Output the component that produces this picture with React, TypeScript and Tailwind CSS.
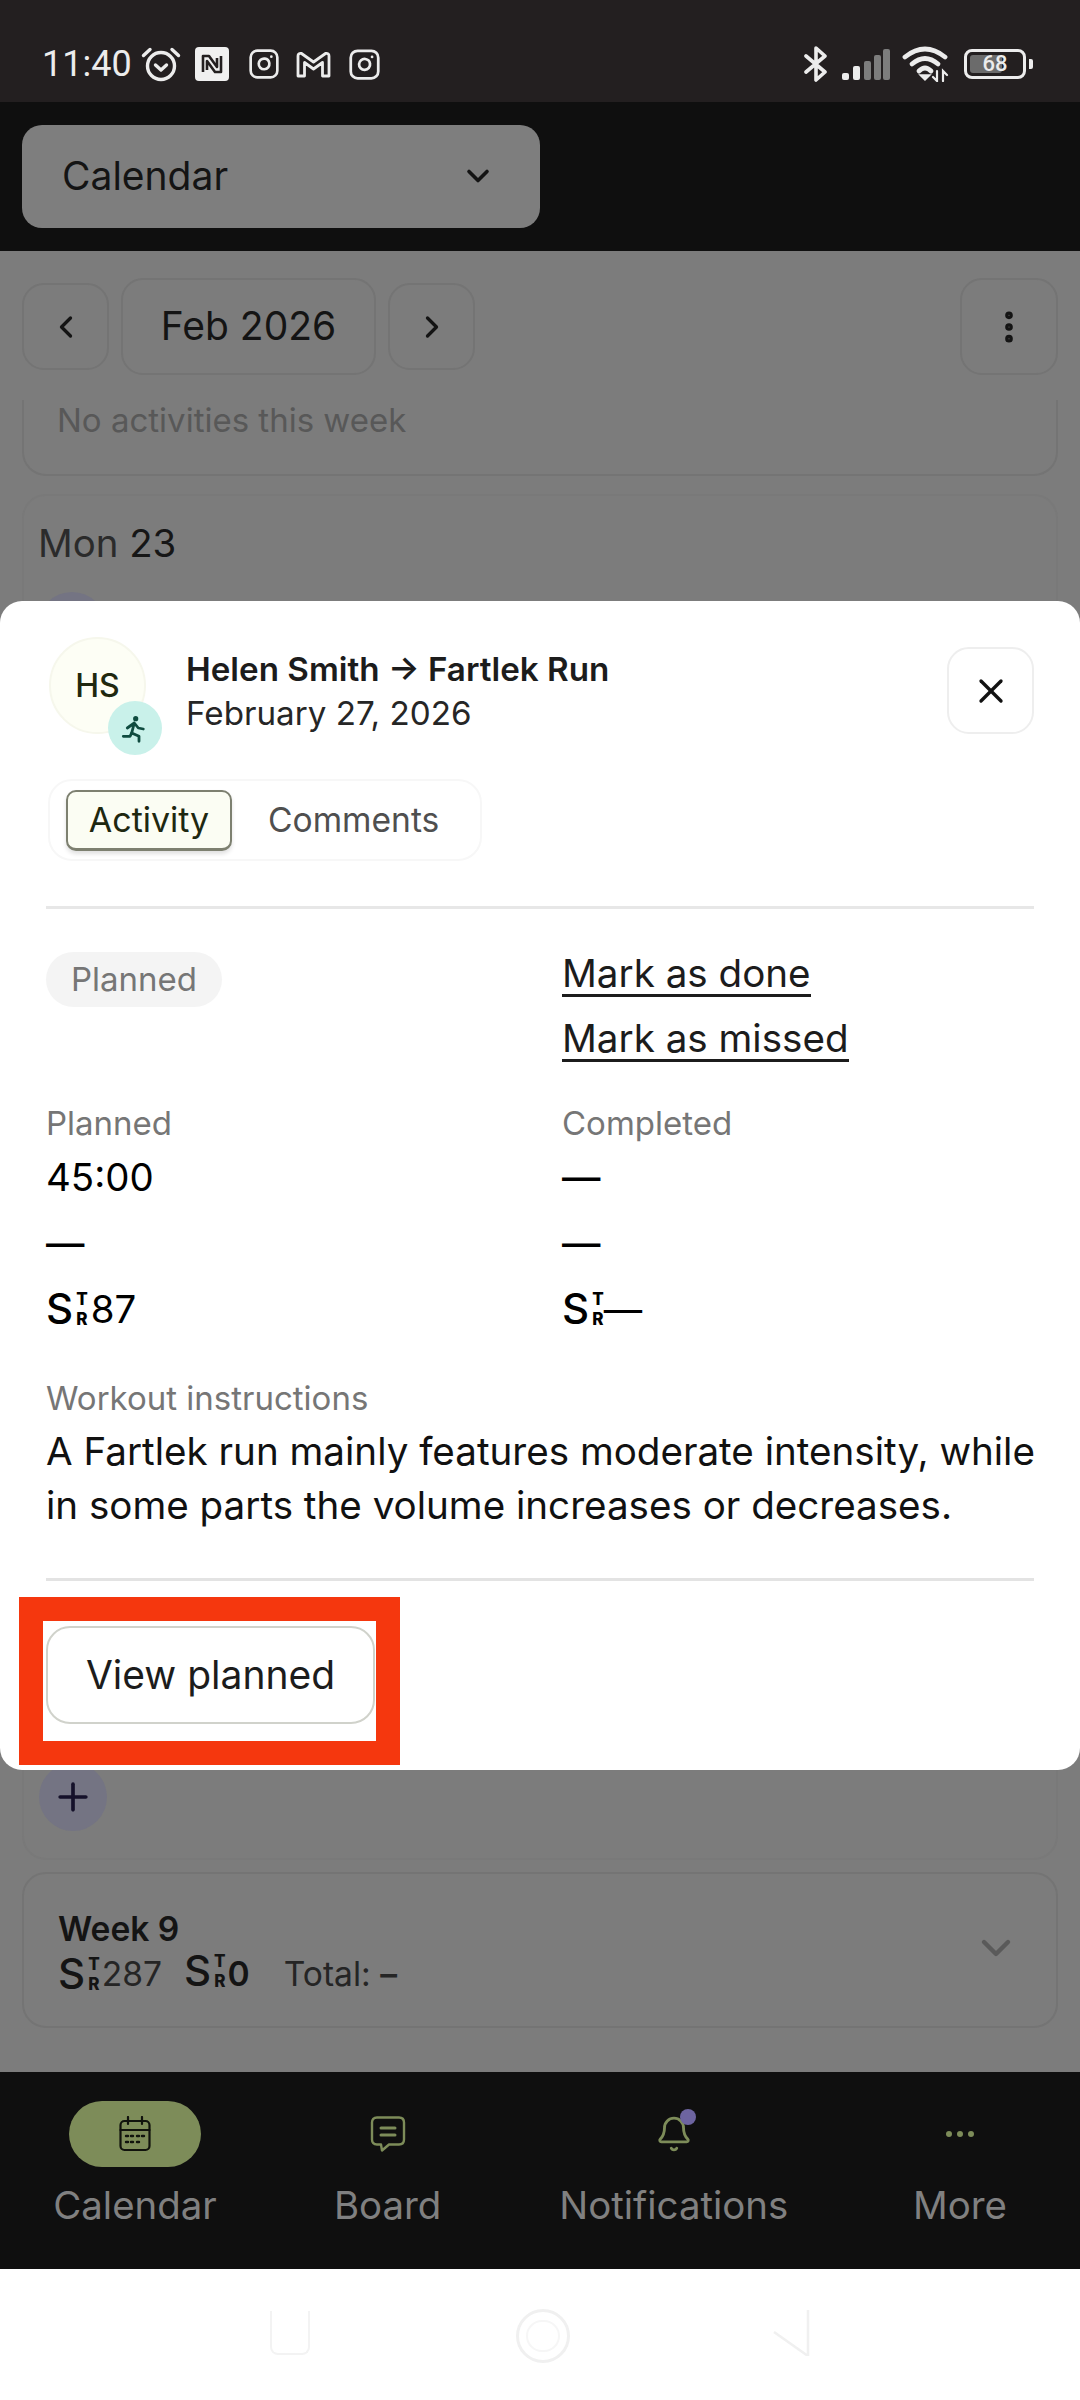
import { Bell, ChevronDown, ChevronLeft, ChevronRight, EllipsisVertical, Instagram, Plus, X } from "lucide-react";

function AlarmIcon() {
  return (
    <svg width="40" height="38" viewBox="0 0 40 38" fill="none" stroke="#ececec" strokeWidth="3.4" strokeLinecap="round" strokeLinejoin="round">
      <circle cx="20" cy="21" r="13.5" />
      <path d="M14.500 20l5.500 5 5.500-5" />
      <path d="M2.500 10.500L9 4.500M37.500 10.500L31 4.500" />
    </svg>
  );
}

function NfcIcon() {
  return (
    <svg width="34" height="34" viewBox="0 0 34 34" fill="none">
      <rect x="0" y="0" width="34" height="34" rx="4" fill="#f0f0f0" />
      <path d="M8 25V9l6 0 8 11V11M26 9v16h-6l-8-11v9" stroke="#231f20" strokeWidth="2.600" strokeLinejoin="round" />
    </svg>
  );
}

function MailIcon() {
  return (
    <svg width="35" height="27" viewBox="0 0 35 27" fill="none" stroke="#ececec" strokeWidth="2.800" strokeLinejoin="round">
      <path d="M2 25V5q0-3 3.500-2.500L17.500 11 29.500 2.500Q33 2 33 5v20h-6.500V11.500l-9 6.500-9-6.500V25z" />
    </svg>
  );
}

function BluetoothIcon() {
  return (
    <svg width="26" height="36" viewBox="0 0 26 36" fill="none" stroke="#ececec" strokeWidth="3.600" strokeLinecap="round" strokeLinejoin="round">
      <path d="M3 10l19 16-9 8V2l9 8L3 26" />
    </svg>
  );
}

function SignalIcon() {
  return (
    <svg width="48" height="31" viewBox="0 0 48 31">
      <rect x="0" y="24" width="7" height="7" rx="2" fill="#ececec" />
      <rect x="11" y="17" width="7" height="14" rx="2" fill="#ececec" />
      <rect x="22" y="12" width="7" height="19" rx="2" fill="#7d7d7d" />
      <rect x="32" y="6" width="7" height="25" rx="2" fill="#7d7d7d" />
      <rect x="41" y="0" width="7" height="31" rx="2" fill="#7d7d7d" />
    </svg>
  );
}

function WifiIcon() {
  return (
    <svg width="48" height="36" viewBox="0 0 48 36" fill="none" stroke="#ececec" strokeWidth="4.800" strokeLinecap="round">
      <path d="M3 11Q23-5 43 11" />
      <path d="M10 18Q23 7 36 18" />
      <path d="M17 25Q23 19 29 25" />
      <path d="M23 34l-5-5h10z" fill="#ececec" strokeWidth="1.500" />
      <path d="M35 25v10l-4-4M41 35V25l4 4" strokeWidth="2.200" />
    </svg>
  );
}

function BatteryIcon() {
  return (
    <div className="flex items-center gap-[3px]">
      <div className="relative flex h-[30px] w-[62px] items-center justify-center overflow-hidden rounded-[8px] border-[3px] border-[#ececec]">
        <div className="absolute top-[3px] bottom-[3px] left-[3px] w-[32px] rounded-[3px] bg-[#6b6b6b]" />
        <span className="relative font-['Roboto',sans-serif] text-[22px] leading-none font-medium text-[#ececec]">68</span>
      </div>
      <div className="h-[10px] w-[4px] rounded-r-[2px] bg-[#ececec]" />
    </div>
  );
}

function RunnerIcon() {
  return (
    <svg width="54" height="54" viewBox="0 0 54 54" fill="none" stroke="#0f4c40" strokeWidth="2.800" strokeLinecap="round" strokeLinejoin="round">
      <circle cx="27.700" cy="17.700" r="2.600" fill="#0f4c40" stroke="none" />
      <path d="M26.300 22L23.700 32M19.300 27l7-5 4 5 5 1" />
      <path d="M23.700 32L22 35.300h-6.700M23.700 32L31 35.300v5" />
    </svg>
  );
}

function StressScore({ color = "text-black" }: { color?: string }) {
  return (
    <span className={`inline-flex h-[32px] items-center ${color}`}>
      <span className="text-[42px] leading-none font-medium">S</span>
      <span className="ml-[3px] flex h-[34px] flex-col items-center justify-between text-[17px] leading-[14px] font-extrabold">
        <span>T</span>
        <span>R</span>
      </span>
    </span>
  );
}

function CalendarNavIcon() {
  return (
    <svg width="32" height="36" viewBox="0 0 32 36" fill="none" stroke="#11130d" strokeWidth="2.200" strokeLinecap="round">
      <rect x="1.500" y="5" width="29" height="29" rx="4" />
      <path d="M1.500 14h29M9 1v7M23 1v7" />
      <path d="M7 20h2M12 20h2M18 20h2M23 20h2M7 26h2M12 26h2M18 26h2" strokeWidth="2.400" />
    </svg>
  );
}

function BoardNavIcon() {
  return (
    <svg width="36" height="36" viewBox="0 0 36 36" fill="none" stroke="#7d8c59" strokeWidth="2.400" strokeLinejoin="round" strokeLinecap="round">
      <path d="M7 1.500h22q5 0 5 5v17q0 5-5 5H19l-7 6-1-6H7q-5 0-5-5v-17q0-5 5-5z" />
      <path d="M11 12h14M11 19h14" strokeWidth="3" />
    </svg>
  );
}

function NavItem({ label, active, children }: { label: string; active?: boolean; children: React.ReactNode }) {
  return (
    <div className="flex flex-col items-center">
      <div className={`flex h-[66px] w-[132px] items-center justify-center rounded-full ${active ? "bg-[#7d8c59]" : ""}`}>
        {children}
      </div>
      <span className="mt-[15px] text-[38.4px] leading-[46px] text-[#808080]">{label}</span>
    </div>
  );
}

function MetricRow({ children }: { children: React.ReactNode }) {
  return <div className="flex h-[66px] items-center text-[38.4px] leading-none font-medium text-black">{children}</div>;
}

export default function App() {
  return (
    <div className="relative flex h-[2400px] w-[1080px] flex-col overflow-hidden bg-white font-['Inter',sans-serif]">
      {/* status bar */}
      <div className="flex h-[102px] shrink-0 items-center justify-between bg-[#231f20] pt-[26px] pr-[47px] pl-[42px]">
        <div className="flex items-center">
          <span className="w-[91px] font-['Roboto',sans-serif] text-[36px] leading-none font-normal text-[#ececec]">11:40</span>
          <div className="ml-[8px] flex items-center">
            <AlarmIcon />
            <div className="ml-[14px]"><NfcIcon /></div>
            <Instagram className="ml-[19px]" size={32} color="#ececec" strokeWidth={2} />
            <div className="ml-[16px]"><MailIcon /></div>
            <Instagram className="ml-[17px]" size={33} color="#ececec" strokeWidth={2} />
          </div>
        </div>
        <div className="flex items-center">
          <BluetoothIcon />
          <div className="ml-[13px]"><SignalIcon /></div>
          <div className="ml-[12px]"><WifiIcon /></div>
          <div className="ml-[14px]"><BatteryIcon /></div>
        </div>
      </div>

      {/* app header */}
      <div className="flex h-[149px] shrink-0 items-center bg-[#0f0f0f] px-[22px]">
        <div className="flex h-[103px] w-[518px] items-center justify-between rounded-[20px] bg-[#7e7e7e] pr-[44px] pb-[2px] pl-[40px]">
          <span className="text-[39px] leading-none font-normal text-[#141414]">Calendar</span>
          <ChevronDown size={36} color="#141414" strokeWidth={2.4} />
        </div>
      </div>

      {/* dimmed page */}
      <div className="flex h-[1821px] shrink-0 flex-col bg-[#7c7c7c] px-[22px]">
        <div className="flex h-[149px] shrink-0 items-center justify-between pt-[2px]">
          <div className="flex items-center gap-[12px]">
            <div className="flex h-[87px] w-[87px] items-center justify-center rounded-[22px] border-2 border-[#747474]">
              <ChevronLeft size={36} color="#141414" strokeWidth={2.2} />
            </div>
            <div className="flex h-[97px] w-[255px] items-center justify-center rounded-[22px] border-2 border-[#747474] text-[39px] text-[#141414]">
              Feb 2026
            </div>
            <div className="flex h-[87px] w-[87px] items-center justify-center rounded-[22px] border-2 border-[#747474]">
              <ChevronRight size={36} color="#141414" strokeWidth={2.2} />
            </div>
          </div>
          <div className="flex h-[97px] w-[98px] items-center justify-center rounded-[22px] border-2 border-[#747474]">
            <EllipsisVertical size={40} color="#141414" strokeWidth={2.6} />
          </div>
        </div>

        <div className="h-[76px] shrink-0 rounded-b-[24px] border-x-2 border-b-2 border-[#747474] pl-[33px]">
          <span className="block text-[33px] leading-[41px] text-[#585858]">No activities this week</span>
        </div>

        <div className="relative mt-[18px] h-[1366px] shrink-0 rounded-[24px] border-2 border-[#797979] pt-[25px] pl-[14px]">
          <div className="text-[38.4px] leading-[44px] text-[#2b2b2b]">
            Mon <span className="font-normal text-[#161616]">23</span>
          </div>
          <div className="mt-[27px] flex h-[68px] w-[68px] items-center justify-center rounded-full bg-[#747483]" />
          <div className="absolute bottom-[27px] left-[15px] flex h-[68px] w-[68px] items-center justify-center rounded-full bg-[#747483]">
            <Plus size={44} color="#15112a" strokeWidth={2} />
          </div>
        </div>

        <div className="mt-[12px] flex h-[156px] shrink-0 items-start justify-between rounded-[24px] border-2 border-[#747474] pt-[36px] pr-[36px] pl-[34px]">
          <div>
            <div className="text-[33.6px] leading-[38px] font-semibold text-[#141414]">Week 9</div>
            <div className="mt-[7px] flex items-center">
              <StressScore color="text-[#141414]" />
              <span className="ml-[2px] text-[33.6px] leading-none text-[#252525]">287</span>
              <span className="ml-[22px]"><StressScore color="text-[#141414]" /></span>
              <span className="ml-[2px] text-[33.6px] leading-none font-semibold text-[#141414]">0</span>
              <span className="ml-[34px] text-[33.6px] leading-none text-[#252525]">Total: <span className="font-semibold">–</span></span>
            </div>
          </div>
          <ChevronDown className="mt-[14px]" size={48} color="#5a5a5a" strokeWidth={2.2} />
        </div>
      </div>

      {/* bottom nav */}
      <div className="flex h-[197px] shrink-0 items-start justify-between bg-[#0f0f0f] pt-[29px] pr-[54px] pl-[54px]">
        <div className="flex w-[162px] justify-center">
          <NavItem label="Calendar" active><CalendarNavIcon /></NavItem>
        </div>
        <NavItem label="Board"><BoardNavIcon /></NavItem>
        <NavItem label="Notifications">
          <div className="relative">
            <Bell size={38} color="#7d8c59" strokeWidth={1.8} />
            <div className="absolute -top-[6px] right-[-3px] h-[16px] w-[16px] rounded-full bg-[#6d64a0]" />
          </div>
        </NavItem>
        <NavItem label="More">
          <div className="flex gap-[5px]">
            <div className="h-[6px] w-[6px] rounded-full bg-[#7d8c59]" />
            <div className="h-[6px] w-[6px] rounded-full bg-[#7d8c59]" />
            <div className="h-[6px] w-[6px] rounded-full bg-[#7d8c59]" />
          </div>
        </NavItem>
      </div>

      {/* system nav */}
      <div className="flex flex-1 items-center justify-center bg-white pb-[3px]">
        <div className="h-[44px] w-[40px] rounded-b-[8px] border-x-2 border-b-2 border-[#f3f3f3]" />
        <div className="mt-[6px] mr-[202px] ml-[206px] flex h-[54px] w-[54px] items-center justify-center rounded-full border-[3px] border-[#f0f0f0]">
          <div className="h-[32px] w-[34px] rounded-full border-2 border-[#f6f6f6]" />
        </div>
        <svg width="38" height="46" viewBox="0 0 38 46" fill="none" stroke="#f0f0f0" strokeWidth="2.500">
          <path d="M36 0v46L2 22" />
        </svg>
      </div>

      {/* modal */}
      <div className="absolute top-[601px] left-0 h-[1169px] w-[1080px] rounded-[22px] bg-white px-[46px]">
        <div className="flex items-start justify-between pt-[36px]">
          <div className="flex items-start">
            <div className="relative ml-[3px] flex h-[97px] w-[97px] items-center justify-center rounded-full border-2 border-[#f6f7ec] bg-[#fdfef5] text-[32px] font-medium text-[#20280f]">
              HS
              <div className="absolute -right-[18px] -bottom-[23px] h-[54px] w-[54px] rounded-full bg-[#c9f1ea]">
                <RunnerIcon />
              </div>
            </div>
            <div className="ml-[40px] pt-[12px]">
              <div className="text-[33.2px] leading-[40px] font-semibold text-[#1c1c1c]">Helen Smith → Fartlek Run</div>
              <div className="mt-[4px] text-[33.2px] leading-[40px] text-[#262626]">February 27, 2026</div>
            </div>
          </div>
          <div className="mt-[10px] flex h-[87px] w-[87px] items-center justify-center rounded-[22px] border-2 border-[#eeeeee]">
            <X size={40} color="#111111" strokeWidth={2} />
          </div>
        </div>

        <div className="mt-[45px] ml-[2px] flex h-[82px] w-[434px] items-center rounded-[24px] border-2 border-[#f7f7f7] pl-[16px]">
          <div className="flex h-[61px] w-[166px] items-center justify-center rounded-[10px] border-2 border-b-[3px] border-[#7d8070] bg-[#fbfdf3] text-[34px] text-[#1e2810] shadow-[0_3px_4px_rgba(0,0,0,0.12)]">
            Activity
          </div>
          <span className="ml-[36px] text-[33.6px] font-normal text-[#4f4f4f]">Comments</span>
        </div>

        <div className="mt-[45px] h-[3px] w-[988px] bg-[#e7e7e7]" />

        <div className="mt-[43px] grid grid-cols-[516px_1fr]">
          <div>
            <span className="inline-flex h-[55px] w-[176px] items-center justify-center rounded-full bg-[#f4f4f4] text-[33px] text-[#767676]">Planned</span>
          </div>
          <div className="-mt-[3px] flex flex-col items-start">
            <span className="border-b-[3px] border-[#1c1c1c] pt-[3px] text-[38.6px] leading-[42px] text-[#1c1c1c]">Mark as done</span>
            <span className="mt-[20px] border-b-[3px] border-[#1c1c1c] text-[38.6px] leading-[42px] text-[#1c1c1c]">Mark as missed</span>
          </div>

          <div className="mt-[41px]">
            <div className="text-[33px] leading-[40px] text-[#767676]">Planned</div>
            <div className="mt-[1px]"><MetricRow><span className="font-normal">45:00</span></MetricRow></div>
            <MetricRow>—</MetricRow>
            <MetricRow><StressScore /><span className="ml-[3px] font-normal">87</span></MetricRow>
          </div>
          <div className="mt-[41px]">
            <div className="text-[33px] leading-[40px] text-[#767676]">Completed</div>
            <div className="mt-[1px]"><MetricRow>—</MetricRow></div>
            <MetricRow>—</MetricRow>
            <MetricRow><StressScore /><span className="font-normal">—</span></MetricRow>
          </div>
        </div>

        <div className="mt-[36px] text-[33px] leading-[40px] text-[#767676]">Workout instructions</div>
        <p className="mt-[6px] w-[1000px] text-[38.6px] leading-[54px] text-[#111111]">
          A Fartlek run mainly features moderate intensity, while in some parts the volume increases or decreases.
        </p>

        <div className="mt-[46px] h-[3px] w-[988px] bg-[#e3e3e3]" />

        <div className="mt-[16px] -ml-[27px] h-[168px] w-[381px] border-[24px] border-[#f5370e] bg-white pt-[5px] pl-[3px]">
          <div className="flex h-[98px] w-[329px] items-center justify-center rounded-[24px] border-2 border-[#d0d2cb] text-[39px] text-[#1c1c1c]">
            View planned
          </div>
        </div>
      </div>
    </div>
  );
}
